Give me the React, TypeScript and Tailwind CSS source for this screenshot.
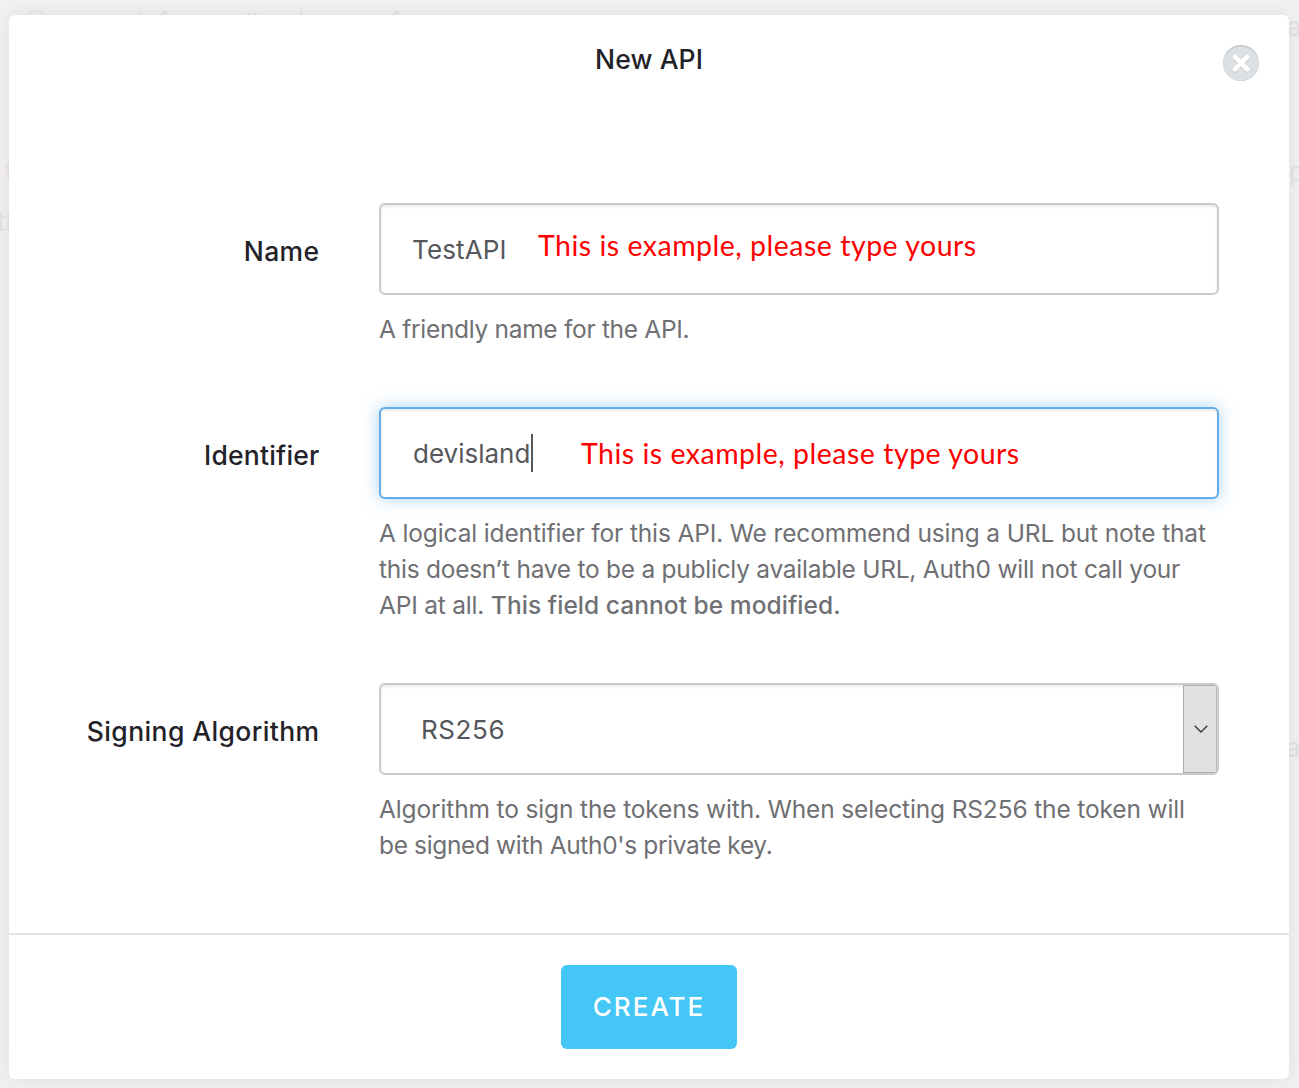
import type { ReactNode } from "react";

function Field({ label, labelClass, help, children }: { label: string; labelClass: string; help: ReactNode; children: ReactNode }) {
  return (
    <div className="flex gap-[60px]">
      <div className="flex h-24 w-[310px] shrink-0 items-center justify-end">
        <span className={`-mr-[0.5px] whitespace-nowrap text-[26.5px] leading-9 font-medium text-[#222228] ${labelClass}`}>{label}</span>
      </div>
      <div className="w-[840px] shrink-0">
        {children}
        <div className="mt-4 text-[24.5px] leading-9 whitespace-nowrap text-[#6f7073]">{help}</div>
      </div>
    </div>
  );
}

function Note({ className }: { className: string }) {
  return (
    <span className={`font-['Lato',sans-serif] text-[28.5px] leading-9 tracking-[0.5px] whitespace-nowrap text-[#ff0000] ${className}`}>
      This is example, please type yours
    </span>
  );
}

export default function App() {
  return (
    <div className="relative h-[1088px] w-[1299px] overflow-hidden bg-[#f2f1ef] pt-[15px] pl-[9px] font-['Inter','Liberation_Sans',sans-serif]">
      <div className="absolute inset-0 text-[26px] leading-9 text-[#e3e1e2]">
        <span className="absolute top-[10px] left-[26px] size-[21px] rounded-full border-2 border-[#e6e4e5]" />
        <span className="absolute top-[5px] left-[136px]">i</span>
        <span className="absolute top-[5px] left-[158px]">f</span>
        <span className="absolute top-[5px] left-[246px]">ll</span>
        <span className="absolute top-[5px] left-[298px]">i</span>
        <span className="absolute top-[5px] left-[390px]">f</span>
        <span className="absolute top-[9px] left-[1287px]">a</span>
        <span className="absolute top-[154px] left-[5px]">t</span>
        <span className="absolute top-[204px] -left-[3px]">th</span>
        <span className="absolute top-[154px] left-[1289px] text-[#e0e4e8]">p</span>
        <span className="absolute top-[730px] left-[1286px]">a</span>
      </div>
      <div className="relative flex h-[1064px] w-[1280px] flex-col rounded-[6px] bg-white shadow-[0_0_20px_rgba(80,60,80,0.09)]">
        <header className="flex h-[188px] shrink-0 justify-center pt-[26px]">
          <h1 className="h-9 text-[26.5px] leading-9 font-medium tracking-[0.1px] whitespace-nowrap text-[#222228]">New API</h1>
          <button aria-label="Close" className="absolute top-[30px] right-[30px] size-9">
            <svg viewBox="0 0 36 36" className="size-9">
              <circle cx="18" cy="18" r="18" fill="#c3c9ce" />
              <path d="M.1 19.5C.1 9.5 8 1.8 18 1.8s17.900 7.700 17.900 17.700A18 18 0 0 1 .1 19.500Z" fill="#dce0e3" />
              <path d="M11.900 13l12.400 12.400M24.300 13L11.900 25.400" stroke="#c3c9ce" strokeWidth="4.600" strokeLinecap="round" />
              <path d="M11.900 11.900l12.400 12.400M24.300 11.900L11.900 24.300" stroke="#fff" strokeWidth="4.600" strokeLinecap="round" />
            </svg>
          </button>
        </header>
        <main className="flex h-[730px] shrink-0 flex-col gap-[60px]">
          <Field label="Name" labelClass="tracking-[0.4px]" help={<p className="tracking-[-0.3px]">A friendly name for the API.</p>}>
            <div className="flex h-[92px] items-center rounded-[6px] border-2 border-[#cbcbcb] bg-white pl-8 shadow-[inset_0_2px_3px_rgba(0,0,0,0.08)]">
              <span className="mt-0.5 -ml-px w-[126px] text-[26px] leading-9 tracking-[0.15px] text-[#56575a]">TestAPI</span>
              <Note className="-mt-2" />
            </div>
          </Field>
          <Field
            label="Identifier"
            labelClass="tracking-[0.2px]"
            help={
              <>
                <p className="tracking-[-0.14px]">A logical identifier for this API. We recommend using a URL but note that</p>
                <p className="tracking-[-0.26px]">this doesn’t have to be a publicly available URL, Auth0 will not call your</p>
                <p className="tracking-[-0.2px]">
                  API at all. <b className="font-medium tracking-[0.05px]">This field cannot be modified.</b>
                </p>
              </>
            }
          >
            <div className="flex h-[92px] items-center rounded-[6px] border-2 border-[#64ade8] bg-white pl-8 shadow-[inset_0_2px_3px_rgba(0,0,0,0.08),0_0_16px_rgba(82,168,236,0.5)]">
              <div className="flex w-[168px] items-center">
                <span className="mt-0.5 w-[118px] text-[26px] leading-9 whitespace-nowrap text-[#56575a]">devisland</span>
                <span className="h-[38px] w-[2px] bg-[#56575a]" />
              </div>
              <Note className="" />
            </div>
          </Field>
          <Field
            label="Signing Algorithm"
            labelClass="tracking-[0.4px]"
            help={
              <>
                <p className="tracking-[-0.14px]">Algorithm to sign the tokens with. When selecting RS256 the token will</p>
                <p className="tracking-[-0.36px]">be signed with Auth0's private key.</p>
              </>
            }
          >
            <div className="flex h-[92px] items-center overflow-hidden rounded-[6px] border-2 border-[#cbcbcb] bg-white pl-10 shadow-[inset_0_2px_3px_rgba(0,0,0,0.08)]">
              <span className="mt-0.5 flex-1 text-[26px] leading-9 tracking-[0.6px] text-[#56575a]">RS256</span>
              <div className="flex h-[88px] w-[34px] items-center justify-center border border-y-[#adadad] border-r-[#bdbdbd] border-l-[#adadad] bg-[#e1e1e1] pl-px">
                <svg viewBox="0 0 14 8" className="h-2 w-[14px]">
                  <path d="M.7.7L7 7 13.300.7" fill="none" stroke="#333" strokeWidth="1.300" />
                </svg>
              </div>
            </div>
          </Field>
        </main>
        <footer className="flex flex-1 items-start justify-center border-t-2 border-[#e3e3e3] pt-[30px]">
          <button className="h-[84px] w-[176px] rounded-[6px] bg-[#44c7f6] text-[26px] leading-9 font-medium tracking-[2px] text-white">CREATE</button>
        </footer>
      </div>
    </div>
  );
}
